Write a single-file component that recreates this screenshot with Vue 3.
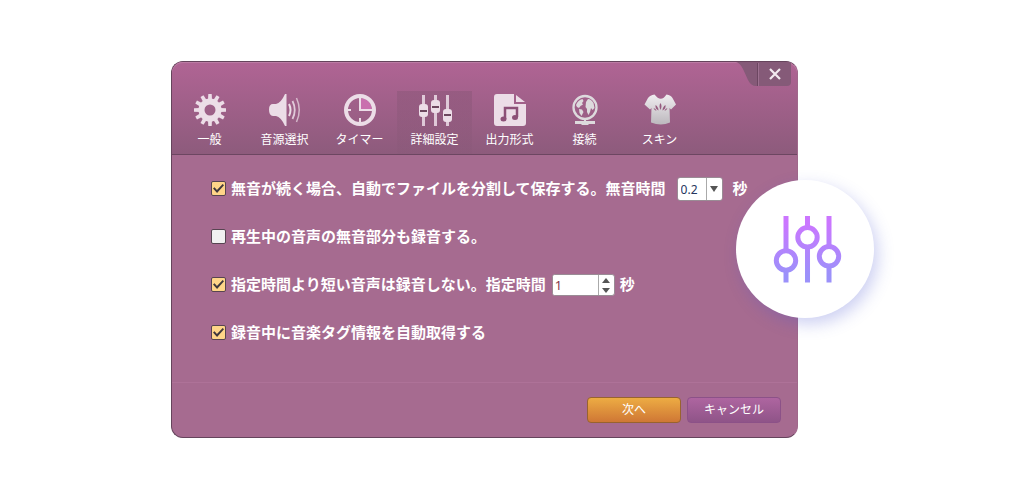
<script setup>
import { ref } from 'vue'

const tabs = [
  { id: 'general', label: '一般' },
  { id: 'source', label: '音源選択' },
  { id: 'timer', label: 'タイマー' },
  { id: 'advanced', label: '詳細設定' },
  { id: 'format', label: '出力形式' },
  { id: 'network', label: '接続' },
  { id: 'skin', label: 'スキン' }
]
const active = ref('advanced')
const split = ref(true)
const keepSilence = ref(false)
const skipShort = ref(true)
const tags = ref(true)
const silence = ref('0.2')
const minimum = ref(1)
const teeth = Array.from({ length: 12 }, (_, i) => `rotate(${i * 30} 16 16)`)
</script>

<template>
  <main class="stage">
    <section class="dialog" role="dialog" aria-label="詳細設定">
      <header class="head">
        <div class="corner">
          <svg class="corner-bg" width="55" height="24" viewBox="0 0 55 24" aria-hidden="true">
            <path d="M0 0H55V20Q55 24 51 24H20Q15 24 12 18L7 7Q4 1 0 0Z" fill="#855a78" />
            <path d="M21.500 1V24" stroke="#6c4661" />
            <path d="M22.500 1V24" stroke="#9d7190" />
          </svg>
          <button class="close" type="button" aria-label="閉じる">
            <svg width="12" height="12" viewBox="0 0 12 12"><path d="M1 1L11 11M11 1L1 11" stroke="#f2e9ef" stroke-width="2.200" /></svg>
          </button>
        </div>
        <nav class="tabs">
          <button v-for="tab in tabs" :key="tab.id" type="button" class="tab" :class="{ active: active === tab.id }" @click="active = tab.id">
            <svg class="icon" width="32" height="32" viewBox="0 0 32 32" fill="#ecdde7" aria-hidden="true">
              <template v-if="tab.id === 'general'">
                <path v-for="t in teeth" :key="t" :transform="t" d="M14 6L14.300 0H17.700L18 6Z" />
                <circle cx="16" cy="16" r="8.500" fill="none" stroke="#ecdde7" stroke-width="6" />
              </template>
              <template v-else-if="tab.id === 'source'">
                <path d="M0 15.500Q0 10 4 10H7Q12 9 16 0H17.500V32H16Q12 23 7 22H4Q0 22 0 15.500Z" />
                <g fill="none" stroke="#ecdde7">
                  <path d="M20 10Q23 16 20 22" stroke-width="2" />
                  <path d="M23.500 7Q28 16 23.500 25" stroke-width="1.800" opacity=".85" />
                  <path d="M27.500 4Q33 16 27.500 28" stroke-width="1.500" opacity=".7" />
                </g>
              </template>
              <template v-else-if="tab.id === 'timer'">
                <path d="M17 4A12 12 0 0 1 28 15H17Z" fill="#c970ae" />
                <circle cx="16" cy="16" r="14" fill="none" stroke="#ecdde7" stroke-width="4" />
                <path d="M16 7V16H25M16 4V8M16 24V29M3 16H7M25 16H29" fill="none" stroke="#ecdde7" stroke-width="2" />
              </template>
              <template v-else-if="tab.id === 'advanced'">
                <path d="M3 1H6V32H3ZM15 1H18V32H15ZM27 1H30V32H27Z" opacity=".85" />
                <rect y="10" width="9" height="13" rx="3" />
                <rect x="12" y="6" width="9" height="13" rx="3" />
                <rect x="24" y="15" width="9" height="13" rx="3" />
                <path d="M1 16H8V18H1ZM13 12H20V14H13ZM25 20H32V22H25Z" fill="#6d485f" />
              </template>
              <template v-else-if="tab.id === 'format'">
                <path d="M3 0H20V10H32V29Q32 32 29 32H3Q0 32 0 29V3Q0 0 3 0Z" />
                <path d="M22 1L31 8H22Z" />
                <path d="M11 25V14H23V23" fill="none" stroke="#8c5077" stroke-width="2.500" />
                <ellipse cx="9.500" cy="25" rx="3" ry="2.500" fill="#8c5077" />
                <ellipse cx="21" cy="23.500" rx="3" ry="2.500" fill="#8c5077" />
              </template>
              <template v-else-if="tab.id === 'network'">
                <g fill="#dddadd">
                  <circle cx="16" cy="13.500" r="11.500" fill="none" stroke="#dddadd" stroke-width="2.300" />
                  <path d="M7 11Q9 6 13.500 5L14.500 7L13 9L14 10.500L11.500 12L10 14L8 13ZM17 8L19 5Q22 5 24.500 9L25.500 14L23.500 16L22 14L21 18L19.500 21L18 18V15L16.500 13ZM10 15L13 15.500L14.500 18L12.500 22L10.500 19Z" />
                  <path d="M15 25H17V27H26V30H20L19 31H13L12 30H6V27H15Z" />
                </g>
              </template>
              <template v-else>
                <defs><linearGradient id="shirt" x2="0" y2="1"><stop stop-color="#f0edf0" /><stop offset="1" stop-color="#bcb8bd" /></linearGradient></defs>
                <path d="M10.500 0.500Q17 9 22.500 0.500Q27 1 28.500 4L32 10.500L27 15.500L25.500 14L26 28.500Q17 32.500 7 28.500L7.500 14L6 15.500L0.500 10.500L4 4Q6 1 10.500 0.500Z" fill="url(#shirt)" />
                <path d="M16.500 16Q14.500 12 16.500 9Q18.500 12 16.500 16ZM14.500 16.500Q11 15 11.500 11Q14.500 13 14.500 16.500ZM18.500 16.500Q18.500 13 21.500 11Q22 15 18.500 16.500ZM12.500 17Q10 16 9.500 14Q12 14.500 12.500 17ZM20.500 17Q21 14.500 23.500 14Q23 16 20.500 17Z" fill="#965b7f" />
              </template>
            </svg>
            <span class="tab-label">{{ tab.label }}</span>
          </button>
        </nav>
      </header>

      <form class="body" @submit.prevent>
        <div class="row">
          <input id="split" v-model="split" class="check" type="checkbox" />
          <label for="split">無音が続く場合、自動でファイルを分割して保存する。</label>
          <label for="silence">無音時間</label>
          <span class="combo">
            <select id="silence" v-model="silence"><option>0.2</option><option>0.5</option><option>1.0</option></select>
            <span class="combo-arrow"><svg width="8" height="6" viewBox="0 0 8 6"><path d="M0 0H8L4 6Z" fill="#555" /></svg></span>
          </span>
          <span class="unit wide">秒</span>
        </div>
        <div class="row">
          <input id="keep" v-model="keepSilence" class="check" type="checkbox" />
          <label for="keep">再生中の音声の無音部分も録音する。</label>
        </div>
        <div class="row">
          <input id="short" v-model="skipShort" class="check" type="checkbox" />
          <label for="short">指定時間より短い音声は録音しない。</label>
          <label for="minimum">指定時間</label>
          <span class="spinner">
            <input id="minimum" v-model="minimum" type="number" min="1" />
            <span class="steps">
              <button type="button" aria-label="増やす" @click="minimum++"><svg width="8" height="5" viewBox="0 0 8 5"><path d="M0 5H8L4 0Z" fill="#555" /></svg></button>
              <button type="button" aria-label="減らす" @click="minimum--"><svg width="8" height="5" viewBox="0 0 8 5"><path d="M0 0H8L4 5Z" fill="#555" /></svg></button>
            </span>
          </span>
          <span class="unit">秒</span>
        </div>
        <div class="row">
          <input id="tags" v-model="tags" class="check" type="checkbox" />
          <label for="tags">録音中に音楽タグ情報を自動取得する</label>
        </div>
      </form>

      <footer class="foot">
        <button class="btn next" type="button">次へ</button>
        <button class="btn cancel" type="button">キャンセル</button>
      </footer>

      <div class="badge">
        <svg width="74" height="68" viewBox="-6 0 74 68" fill="none" aria-hidden="true">
          <defs>
            <linearGradient id="violet" gradientUnits="userSpaceOnUse" x1="0" y1="8" x2="0" y2="60">
              <stop stop-color="#cb76ff" /><stop offset="1" stop-color="#9b91fa" />
            </linearGradient>
          </defs>
          <g stroke="url(#violet)" stroke-width="5">
            <path d="M12 1V35M12.010 57V67.500M33.500 1V11M33.510 33V67.500M55 1V30M55.010 52V67.500" />
            <circle cx="12" cy="45.500" r="9.700" />
            <circle cx="33.500" cy="22.300" r="9.700" />
            <circle cx="55" cy="41.300" r="9.700" />
          </g>
        </svg>
      </div>
    </section>
  </main>
</template>

<style>
body { background: #fff; }
</style>

<style scoped>
* { box-sizing: border-box; }
.stage {
  padding: 61px 228px 60px 171px;
  font-family: "Liberation Sans", "Noto Sans CJK JP", sans-serif;
  color: #fff;
}
button { font: inherit; color: inherit; padding: 0; border: 0; background: none; cursor: pointer; }
svg { display: block; }
.dialog {
  position: relative;
  border: 1px solid #65445c;
  border-right-color: #a0688b;
  border-radius: 12px;
  background: #a66b90;
}
.head {
  padding-top: 29px;
  height: 93px;
  border-bottom: 1px solid #6c4661;
  border-radius: 11px 11px 0 0;
  background: linear-gradient(#b06494, #8d5b7c);
  box-shadow: inset 0 1px #bb7ca4;
}
.corner { position: absolute; top: 0; right: 6px; width: 55px; height: 24px; }
.corner-bg { position: absolute; inset: 0; }
.close { position: absolute; right: 0; top: 0; width: 32px; height: 24px; display: grid; place-items: center; }
.tabs { display: flex; }
.tab {
  display: flex;
  flex-direction: column;
  align-items: center;
  width: 75px;
  height: 63px;
  padding-top: 3px;
  gap: 5px;
}
.tab.active { background: linear-gradient(rgba(110, 75, 98, .25), rgba(110, 75, 98, .05)); }
.icon { flex: none; overflow: visible; }
.tab-label { font-size: 12px; line-height: 18px; white-space: nowrap; }
.body {
  display: flex;
  flex-direction: column;
  gap: 24px;
  padding: 22px 0 37px 39px;
}
.row { display: flex; align-items: center; height: 24px; font-size: 15px; font-weight: 700; line-height: 24px; white-space: nowrap; }
.check {
  appearance: none;
  flex: none;
  width: 15px;
  height: 15px;
  margin: 0 5px 1px 0;
  border: 1px solid #574451;
  border-radius: 2px;
  background: #f1f0f0;
  display: grid;
  place-items: center;
}
.check:checked { background: #ffd588; }
.check:checked::before {
  content: "";
  width: 11px;
  height: 9px;
  background: #40383c;
  clip-path: polygon(0 50%, 14% 36%, 36% 66%, 88% 0, 100% 14%, 37% 100%);
}
.combo, .spinner { display: flex; position: relative; border: 1px solid #9a8c95; border-radius: 3px; background: #fff; overflow: hidden; }
.combo { width: 46px; height: 24px; margin-left: 11px; }
.spinner { width: 63px; height: 22px; margin-left: 6px; }
.combo select {
  appearance: none;
  width: 100%;
  padding: 0 0 0 3px;
  border: 0;
  background: #fff;
  font: 12px "Noto Sans", sans-serif;
  color: #26365e;
}
.combo-arrow {
  position: absolute;
  top: 0;
  right: 0;
  bottom: 0;
  width: 16px;
  border-left: 1px solid #aaa;
  display: grid;
  place-items: center;
  pointer-events: none;
}
.spinner input {
  appearance: textfield;
  flex: 1;
  min-width: 0;
  padding: 0 0 0 2px;
  border: 0;
  background: #fff;
  font: 13px "Noto Sans", sans-serif;
  color: #843547;
}
.spinner input::-webkit-inner-spin-button { display: none; }
.steps { display: flex; flex-direction: column; width: 16px; border-left: 1px solid #aaa; }
.steps button { flex: 1; display: grid; place-items: center; }
.unit { margin-left: 5px; }
.unit.wide { margin-left: 10px; }
.foot {
  display: flex;
  justify-content: flex-end;
  gap: 6px;
  padding: 14px 16px 14px 0;
  border-top: 1px solid #ae7298;
}
.btn { width: 94px; height: 26px; border-radius: 4px; font-size: 12px; line-height: 24px; }
.next { border: 1px solid #98632f; background: linear-gradient(#edac43, #cf7735); }
.cancel { border: 1px solid #8c5188; background: linear-gradient(#ae65a0, #8f5488); }
.badge {
  position: absolute;
  right: -77px;
  top: 118px;
  width: 138px;
  height: 138px;
  border-radius: 50%;
  background: #fff;
  box-shadow: 4px 6px 16px rgba(75, 85, 210, .28);
  display: grid;
  place-items: center;
}
</style>
